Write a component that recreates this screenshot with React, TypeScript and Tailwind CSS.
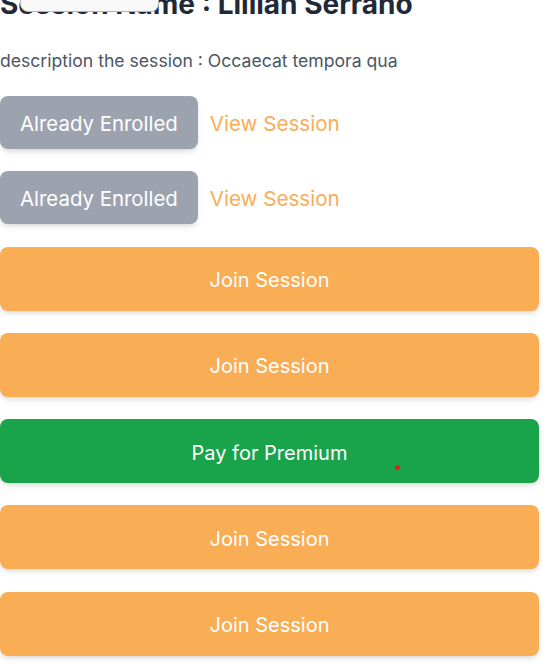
import React from 'react';

type Row =
    | { kind: 'enrolled' }
    | { kind: 'join' }
    | { kind: 'premium' };

const rows: Row[] = [
    { kind: 'enrolled' },
    { kind: 'enrolled' },
    { kind: 'join' },
    { kind: 'join' },
    { kind: 'premium' },
    { kind: 'join' },
    { kind: 'join' },
];

export default function App() {
    return (
        <div className="relative w-[556px] h-[666px] overflow-hidden bg-white font-['Inter',sans-serif]">
            {/* floating popup stub at the top */}
            <div className="absolute left-[20px] top-[-10px] w-[139px] h-[22px] bg-[#f8f8f8] border border-[#b5b5b5] rounded-b-[8px] z-10">
                <div className="absolute left-[6px] top-[-2px] w-[53px] h-[9px] border border-[#b5b5b5] rounded-b-[5px] bg-[#f8f8f8]" />
            </div>

            <div className="w-[539px] -mt-[14px]">
                <h1 className="text-[28px] leading-9 font-bold text-[#1f2937]">
                    Session Name : Lillian Serrano
                </h1>
                <p className="mt-[27px] text-[17.6px] leading-6 text-[#4b5563]">
                    description the session : Occaecat tempora qua
                </p>

                <div className="mt-[23px] flex flex-col gap-[22.3px]">
                    {rows.map((r, i) => {
                        if (r.kind === 'enrolled') {
                            return (
                                <div key={i} className="flex items-center gap-3">
                                    <button className="h-[53px] px-5 pt-[3px] rounded-lg bg-[#9ca3af] text-white text-[20.4px] shadow-md">
                                        Already Enrolled
                                    </button>
                                    <span className="pt-[3px] text-[20.6px] text-[#fbac57]">View Session</span>
                                </div>
                            );
                        }
                        if (r.kind === 'premium') {
                            return (
                                <button key={i} className="relative w-full h-[64px] pt-[3px] rounded-lg bg-[#19a34b] text-white text-[20px] shadow-md">
                                    Pay for Premium
                                    <span className="absolute left-[395px] top-[46px] w-[5px] h-[5px] rounded-full bg-[#e11d1d]" />
                                </button>
                            );
                        }
                        return (
                            <button key={i} className="w-full h-[64px] pt-[3px] rounded-lg bg-[#f9ad55] text-white text-[20px] shadow-md">
                                Join Session
                            </button>
                        );
                    })}
                </div>
            </div>
        </div>
    );
}
